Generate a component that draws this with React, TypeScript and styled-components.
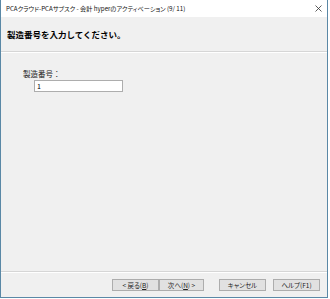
import React from 'react';
import styled, { createGlobalStyle } from 'styled-components';

const GlobalStyle = createGlobalStyle`
    html, body {
        margin: 0;
        padding: 0;
        background: #ffffff;
    }
    body {
        font-family: "Noto Sans CJK JP", "Noto Sans", sans-serif;
        color: #000;
    }
`

const Window = styled.div`
    box-sizing: border-box;
    width: 328px;
    height: 298px;
    display: flex;
    flex-direction: column;
    background: #f0f0f0;
    border: 1px solid #5a88a6;
    border-top: none;
`

const TitleBar = styled.div`
    height: 17px;
    flex: none;
    display: flex;
    align-items: center;
    justify-content: space-between;
    padding: 0 5px 0 5px;
    background: #ffffff;
    font-size: 6.2px;
    font-feature-settings: "palt";
    color: #111;
    white-space: nowrap;
`

const CloseIcon = styled.svg`
    width: 7px;
    height: 7px;
`

const Header = styled.div`
    height: 34px;
    flex: none;
    display: flex;
    align-items: center;
    padding-left: 6px;
    font-size: 8.5px;
    font-weight: bold;
`

const Separator = styled.div`
    flex: none;
    height: 0;
    border-top: 1px solid #d6d6d6;
    border-bottom: 1px solid #ffffff;
`

const Content = styled.div`
    flex: 1;
    display: flex;
    flex-direction: column;
    padding: 16px 0 0 22px;
`

const Label = styled.div`
    font-size: 7.5px;
    line-height: 10px;
    color: #222;
`

const Field = styled.div`
    box-sizing: border-box;
    margin: 1px 0 0 11px;
    width: 89px;
    height: 12px;
    background: #fff;
    border: 1px solid #adadad;
    font-size: 7px;
    line-height: 10px;
    padding-left: 2px;
`

const Footer = styled.div`
    flex: none;
    height: 24px;
    display: flex;
    align-items: center;
    justify-content: flex-end;
    padding-right: 7px;
`

const Button = styled.div<{ $gap?: number; $width?: number }>`
    box-sizing: border-box;
    width: ${(p) => p.$width ?? 47}px;
    height: 12px;
    margin-left: ${(p) => p.$gap ?? 0}px;
    display: flex;
    align-items: center;
    justify-content: center;
    background: #e1e1e1;
    border: 1px solid #adadad;
    font-size: 6.5px;
    font-feature-settings: "palt";
    color: #222;
    white-space: nowrap;
`

function App() {
    return (
        <>
            <GlobalStyle />
            <Window>
                <TitleBar>
                    <span>PCAクラウド-PCAサブスク - 会計 hyperのアクティベーション (9/ 11)</span>
                    <CloseIcon viewBox="0 0 7 7">
                        <path d="M0.5 0.5 L6.5 6.5 M6.5 0.5 L0.5 6.5" stroke="#333" strokeWidth="0.8" />
                    </CloseIcon>
                </TitleBar>
                <Header>製造番号を入力してください。</Header>
                <Separator />
                <Content>
                    <Label>製造番号：</Label>
                    <Field>1</Field>
                </Content>
                <Separator />
                <Footer>
                    <Button>&lt; 戻る(<u>B</u>)</Button>
                    <Button $width={45}>次へ(<u>N</u>) &gt;</Button>
                    <Button $gap={15}>キャンセル</Button>
                    <Button $gap={7}>ヘルプ(F1)</Button>
                </Footer>
            </Window>
        </>
    );
}

export default App;
